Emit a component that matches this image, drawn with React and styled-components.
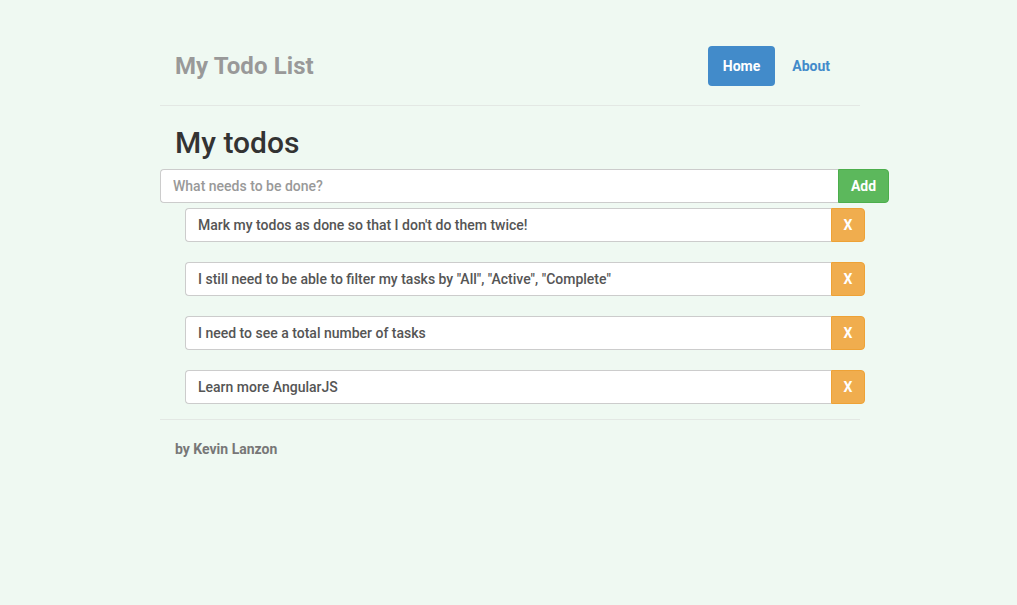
import React from 'react';
import styled, { createGlobalStyle } from 'styled-components';

const GlobalStyle = createGlobalStyle`
  html, body {
    margin: 0;
    padding: 0;
    background: #eff9f2;
    font-family: Roboto, "Helvetica Neue", Arial, sans-serif;
    font-size: 14px;
    color: #333;
  }
  * { box-sizing: border-box; }
`;

const Page = styled.div`
  min-height: 605px;
  padding-left: 3px;
`;

const Container = styled.div`
  width: 700px;
  margin: 0 auto;
`;

const Header = styled.div`
  display: flex;
  align-items: center;
  justify-content: space-between;
  padding: 46px 15px 19px;
  border-bottom: 1px solid #e3e8e4;
`;

const Brand = styled.h3`
  margin: 0;
  font-size: 24px;
  font-weight: 700;
  color: #999;
  line-height: 40px;
  letter-spacing: 0.1px;
`;

const Nav = styled.nav`
  display: flex;
  gap: 2px;
`;

const NavLink = styled.a`
  display: block;
  padding: 10px 15px;
  line-height: 20px;
  font-size: 14px;
  font-weight: 700;
  border-radius: 4px;
  text-decoration: none;
  color: ${(p) => (p.$active ? '#fff' : '#428bca')};
  background: ${(p) => (p.$active ? '#428bca' : 'transparent')};
`;

const Heading = styled.h2`
  margin: 20px 0 10px;
  padding: 0 15px;
  font-size: 30px;
  font-weight: 500;
  line-height: 33px;
  color: #333;
`;

const InputGroup = styled.div`
  display: flex;
  width: ${(p) => (p.$width ? `${p.$width}px` : '100%')};
  height: 34px;
`;

const TextInput = styled.input`
  flex: 1;
  height: 34px;
  padding: 6px 12px;
  font-family: inherit;
  font-size: 14px;
  font-weight: 500;
  color: #555;
  background: #fff;
  border: 1px solid #ccc;
  border-right: none;
  border-radius: 4px 0 0 4px;
  outline: none;
  &::placeholder {
    color: #999;
  }
`;

const GroupButton = styled.button`
  width: ${(p) => p.$width}px;
  height: 34px;
  padding: 0;
  border: 1px solid ${(p) => p.$border};
  border-radius: 0 4px 4px 0;
  background: ${(p) => p.$bg};
  color: #fff;
  font-family: inherit;
  font-size: 14px;
  font-weight: 700;
  cursor: pointer;
`;

const TodoList = styled.div`
  display: flex;
  flex-direction: column;
  gap: 20px;
  margin: 5px 0 15px 25px;
  width: 680px;
`;

const Footer = styled.footer`
  border-top: 1px solid #e3e8e4;
  padding: 19px 15px 0;
`;

const FooterText = styled.p`
  margin: 0;
  line-height: 20px;
  font-size: 14px;
  font-weight: 700;
  color: #777;
`;

const todos = [
  "Mark my todos as done so that I don't do them twice!",
  'I still need to be able to filter my tasks by "All", "Active", "Complete"',
  'I need to see a total number of tasks',
  'Learn more AngularJS',
];

export default function App() {
  return (
    <Page>
      <GlobalStyle />
      <Container>
        <Header>
          <Brand>My Todo List</Brand>
          <Nav>
            <NavLink $active href="#">Home</NavLink>
            <NavLink href="#">About</NavLink>
          </Nav>
        </Header>
        <Heading>My todos</Heading>
        <InputGroup $width={729}>
          <TextInput placeholder="What needs to be done?" />
          <GroupButton $bg="#5cb85c" $border="#4cae4c" $width={51}>Add</GroupButton>
        </InputGroup>
        <TodoList>
          {todos.map((t) => (
            <InputGroup key={t}>
              <TextInput defaultValue={t} />
              <GroupButton $bg="#f0ad4e" $border="#eea236" $width={34}>X</GroupButton>
            </InputGroup>
          ))}
        </TodoList>
        <Footer>
          <FooterText>by Kevin Lanzon</FooterText>
        </Footer>
      </Container>
    </Page>
  );
}
